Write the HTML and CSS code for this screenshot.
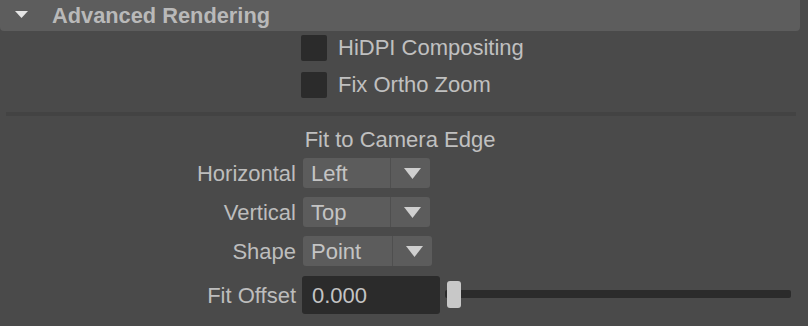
FILE: index.html
```html
<!DOCTYPE html>
<html lang="en">

<head>
    <meta charset="UTF-8">
    <title>Advanced Rendering</title>
    <link rel="stylesheet" href="styles.css">
</head>

<body>
    <div class="panel">
        <div class="section-header">
            <svg class="caret" width="13" height="7" viewBox="0 0 13 7">
                <polygon points="0,0 13,0 6.5,7" fill="#e6e6e6" />
            </svg>
            <span>Advanced Rendering</span>
        </div>

        <div class="checks">
            <label class="check-row"><span class="box"></span>HiDPI Compositing</label>
            <label class="check-row"><span class="box"></span>Fix Ortho Zoom</label>
        </div>

        <div class="separator"></div>

        <h3 class="group-title">Fit to Camera Edge</h3>

        <div class="form">
            <div class="row">
                <span class="label">Horizontal</span>
                <div class="dropdown">
                    <span class="value">Left</span>
                    <span class="arrow"><svg width="17" height="11" viewBox="0 0 17 11"><polygon points="0,0 17,0 8.5,11" fill="#cfcfcf" /></svg></span>
                </div>
            </div>
            <div class="row">
                <span class="label">Vertical</span>
                <div class="dropdown">
                    <span class="value">Top</span>
                    <span class="arrow"><svg width="17" height="11" viewBox="0 0 17 11"><polygon points="0,0 17,0 8.5,11" fill="#cfcfcf" /></svg></span>
                </div>
            </div>
            <div class="row">
                <span class="label">Shape</span>
                <div class="dropdown wide">
                    <span class="value">Point</span>
                    <span class="arrow"><svg width="17" height="11" viewBox="0 0 17 11"><polygon points="0,0 17,0 8.5,11" fill="#cfcfcf" /></svg></span>
                </div>
            </div>
            <div class="row offset-row">
                <span class="label">Fit Offset</span>
                <div class="field">0.000</div>
                <div class="slider">
                    <div class="track"></div>
                    <div class="handle"></div>
                </div>
            </div>
        </div>
    </div>
</body>

</html>
```

FILE: styles.css
```css
body {
    margin: 0;
    padding: 0;
    background-color: #4a4a4a;
    font-family: "Liberation Sans", Arial, sans-serif;
    color: #bdbdbd;
    width: 808px;
    height: 326px;
    overflow: hidden;
}

.panel {
    width: 800px;
}

.section-header {
    height: 31px;
    background-color: #5d5d5d;
    border-radius: 0 0 4px 4px;
    display: flex;
    align-items: center;
    font-size: 21.8px;
    font-weight: bold;
    color: #b9b9b9;
}

.caret {
    margin-left: 15px;
    margin-right: 24px;
    margin-top: -2px;
}

.checks {
    margin-top: 4px;
    display: flex;
    flex-direction: column;
    gap: 11px;
}

.check-row {
    display: flex;
    align-items: center;
    height: 26px;
    padding-left: 301px;
    font-size: 22px;
    color: #c0c0c0;
}

.box {
    width: 26px;
    height: 26px;
    background-color: #2b2b2b;
    border-radius: 2px;
    margin-right: 11px;
}

.separator {
    margin: 14px 4px 0 6px;
    height: 4px;
    background-color: #434343;
}

.group-title {
    margin: 11px 0 0;
    height: 24px;
    line-height: 25px;
    font-size: 22px;
    font-weight: normal;
    text-align: center;
    color: #c0c0c0;
}

.form {
    margin-top: 7px;
    display: flex;
    flex-direction: column;
    gap: 9px;
}

.row {
    display: flex;
    align-items: center;
    height: 30px;
}

.label {
    width: 296px;
    text-align: right;
    font-size: 22px;
    line-height: 31px;
    color: #bdbdbd;
    margin-right: 7px;
}

.dropdown {
    display: flex;
    width: 127px;
    height: 30px;
    background-color: #5c5c5c;
    border-radius: 3px;
}

.dropdown.wide {
    width: 129px;
}

.value {
    flex: 1;
    border-right: 1px solid #4f4f4f;
    padding-left: 8px;
    line-height: 31px;
    font-size: 22px;
    color: #c4c4c4;
}

.arrow {
    width: 39px;
    display: flex;
    align-items: center;
    justify-content: center;
    padding-left: 3px;
    box-sizing: border-box;
}

.offset-row {
    height: 38px;
    margin-top: 1px;
}

.offset-row .label {
    margin-right: 6px;
}

.field {
    width: 128px;
    height: 38px;
    line-height: 39px;
    padding-left: 10px;
    background-color: #2b2b2b;
    border-radius: 3px;
    font-size: 22px;
    color: #c4c4c4;
}

.slider {
    position: relative;
    margin-left: 5px;
    width: 346px;
    height: 38px;
}

.track {
    position: absolute;
    left: 0;
    right: 0;
    top: 14px;
    height: 8px;
    background-color: #2b2b2b;
    border-radius: 2px;
}

.handle {
    position: absolute;
    left: 2px;
    top: 5px;
    width: 14px;
    height: 27px;
    background-color: #c8c8c8;
    border-radius: 3px;
}
```
